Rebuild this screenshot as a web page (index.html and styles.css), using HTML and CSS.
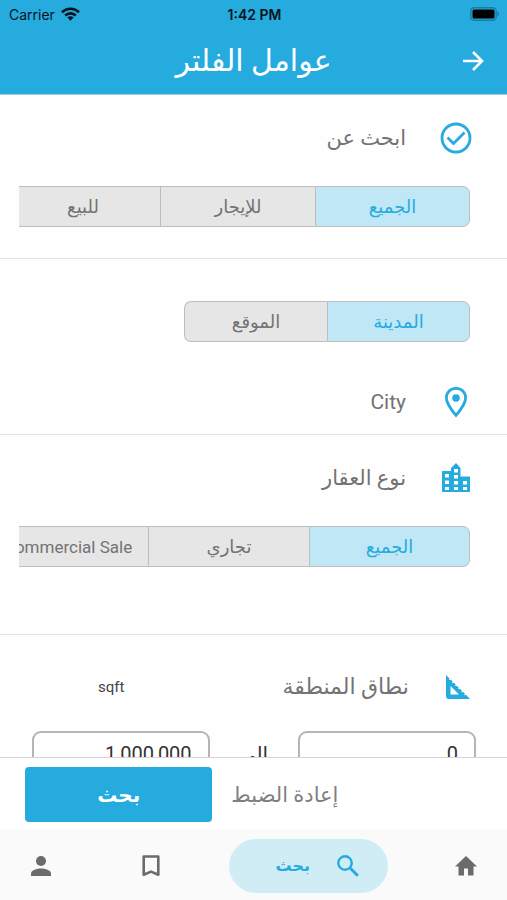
FILE: index.html
```html
<!DOCTYPE html>
<html lang="ar" dir="rtl">
<head>
<meta charset="utf-8">
<meta name="viewport" content="width=device-width, initial-scale=1">
<title>عوامل الفلتر</title>
<link rel="stylesheet" href="styles.css">
</head>
<body>
<header class="top">
  <div class="status" dir="ltr">
    <span class="carrier">Carrier
      <svg width="19" height="14" viewBox="0 0 19 14" aria-hidden="true"><g fill="none" stroke="#06141b" stroke-width="2.6"><path d="M1 5.2a12.2 12.2 0 0 1 17 0"/><path d="M4.2 8.5a7.6 7.6 0 0 1 10.6 0"/></g><path d="M9.500 13.800 6.400 10.600a4.500 4.500 0 0 1 6.200 0z" fill="#06141b"/></svg>
    </span>
    <span class="clock">1:42 PM</span>
    <svg class="battery" width="30" height="14" viewBox="0 0 30 14" aria-hidden="true"><rect x=".8" y=".8" width="25.400" height="12.400" rx="3.500" fill="none" stroke="#1b7ba0" stroke-width="1.400"/><rect x="2.500" y="2.500" width="22" height="9" rx="1.500" fill="#000"/><path d="M27.500 4.500c2 .8 2 4.200 0 5z" fill="#1b7ba0"/></svg>
  </div>
  <div class="titlebar">
    <button class="back" aria-label="رجوع"><svg width="22" height="20" viewBox="0 0 22 20" aria-hidden="true"><path d="M1 10h19M11 1l9 9-9 9" fill="none" stroke="#fff" stroke-width="2.600"/></svg></button>
    <h1>عوامل الفلتر</h1>
  </div>
</header>

<main class="filters">
  <section class="block">
    <div class="heading">
      <svg width="32" height="32" viewBox="0 0 32 32" aria-hidden="true"><circle cx="16" cy="16" r="14" fill="none" stroke="#26abdf" stroke-width="2.800"/><path d="M7.500 15.500l6 6L24.500 10.500" fill="none" stroke="#26abdf" stroke-width="2.800"/></svg>
      <h2>ابحث عن</h2>
    </div>
    <div class="segments" role="group" aria-label="ابحث عن">
      <button class="seg on" aria-pressed="true">الجميع</button>
      <button class="seg" aria-pressed="false">للإيجار</button>
      <button class="seg" aria-pressed="false">للبيع</button>
    </div>
  </section>

  <section class="block place">
    <div class="segments pair" role="group" aria-label="المدينة أو الموقع">
      <button class="seg on" aria-pressed="true">المدينة</button>
      <button class="seg" aria-pressed="false">الموقع</button>
    </div>
    <div class="heading">
      <svg width="32" height="32" viewBox="0 0 32 32" aria-hidden="true"><path d="M16 2.300c-5.500 0-9.600 4.100-9.600 9.500 0 6.600 9.600 17.500 9.600 17.500s9.600-10.900 9.600-17.500c0-5.400-4.100-9.500-9.600-9.500z" fill="none" stroke="#26abdf" stroke-width="2.800"/><circle cx="16" cy="12" r="3.800" fill="#26abdf"/></svg>
      <h2>City</h2>
    </div>
  </section>

  <section class="block type">
    <div class="heading">
      <svg width="32" height="32" viewBox="0 0 32 32" aria-hidden="true"><path fill="#26abdf" fill-rule="evenodd" d="M2 30V9h9V6l5-5 4.500 5v8.500H30V30zM5 12v3.500h4V12zm0 6.500V22h4v-3.500zM5 25v3h4v-3zm9-18v3.500h4V7zm0 6v3.500h4V13zm0 6v3.500h4V19zm0 6v3h4v-3zm9-6v3.500h4V19zm0 6v3h4v-3z"/></svg>
      <h2>نوع العقار</h2>
    </div>
    <div class="segments wide" role="group" aria-label="نوع العقار">
      <button class="seg on" aria-pressed="true">الجميع</button>
      <button class="seg" aria-pressed="false">تجاري</button>
      <button class="seg" aria-pressed="false" lang="en">Commercial Sale</button>
    </div>
  </section>

  <section class="area">
    <div class="area-head">
      <svg width="26" height="26" viewBox="0 0 26 26" aria-hidden="true"><path fill="#26abdf" fill-rule="evenodd" d="M1 1l3.500 3.500L3.800 6l2-.3 1.700 1.700-.7 1.500 2-.2 1.900 1.900-.7 1.500 2-.2 1.700 1.700-.7 1.500 2-.2 1.900 1.900-.7 1.500 2-.2 1.700 1.700-.7 1.500 2-.2L25 25H4c-2 0-3-1-3-3zM5.500 12v8.500H14z"/></svg>
      <h2>نطاق المنطقة</h2>
      <span class="unit">sqft</span>
    </div>
    <div class="range">
      <input type="text" value="0" aria-label="من">
      <span>إلى</span>
      <input type="text" value="1,000,000" aria-label="إلى">
    </div>
  </section>
</main>

<div class="actions">
  <button class="reset">إعادة الضبط</button>
  <button class="search">بحث</button>
</div>

<nav class="tabs">
  <a href="#home" aria-label="الرئيسية"><svg width="24" height="24" viewBox="0 0 24 24" aria-hidden="true"><path fill="#6b6b6b" d="M10 21.500v-7h4v7h5.500V12.500H23L12 2 1 12.500h3.500v9z"/></svg></a>
  <a class="current" href="#search" aria-current="page"><svg width="24" height="24" viewBox="0 0 24 24" aria-hidden="true"><circle cx="9" cy="9" r="6.700" fill="none" stroke="#26abdf" stroke-width="2.400"/><path d="M13.800 13.800l8 8" stroke="#26abdf" stroke-width="3"/></svg><span>بحث</span></a>
  <a href="#saved" aria-label="المحفوظات"><svg width="24" height="24" viewBox="0 0 24 24" aria-hidden="true"><path d="M4.700 2.500h14.600v18.300L12 17.600l-7.300 3.200z" fill="none" stroke="#6b6b6b" stroke-width="2.600" stroke-linejoin="round"/></svg></a>
  <a class="profile" href="#profile" aria-label="حسابي"><svg width="24" height="24" viewBox="0 0 24 24" aria-hidden="true"><circle cx="12" cy="7" r="5" fill="#6b6b6b"/><path fill="#6b6b6b" d="M2 22v-2.500c0-3.300 6-5 10-5s10 1.700 10 5V22z"/></svg></a>
</nav>
</body>
</html>
```
FILE: styles.css
```css
* { box-sizing: border-box; }

body {
  margin: 0;
  height: 100vh;
  display: flex;
  flex-direction: column;
  background: #fefefe;
  color: #737373;
  font-family: Roboto, "DejaVu Sans", sans-serif;
}

h1, h2 { margin: 0; font-weight: 400; }
svg { display: block; flex: none; }
button {
  border: 0;
  padding: 0;
  background: none;
  color: inherit;
  font: inherit;
  cursor: pointer;
}

/* Header */
.top { flex: none; background: #26abdf; border-bottom: 1px solid #9ccfe2; }
.status {
  display: grid;
  grid-template-columns: 1fr auto 1fr;
  align-items: center;
  height: 28px;
  padding: 0 7px 0 9px;
  color: #06141b;
  font-family: Inter, sans-serif;
  font-size: 14px;
}
.carrier { display: flex; align-items: center; gap: 6px; }
.clock { font-weight: 600; }
.battery { justify-self: end; }
.titlebar {
  display: grid;
  grid-template-columns: 24px 1fr 24px;
  align-items: center;
  height: 66px;
  padding: 0 23px;
}
.titlebar h1 { color: #fff; font-size: 30px; line-height: 40px; text-align: center; }

/* Filter sections */
.filters { flex: 1; min-height: 0; overflow: hidden; }
.block {
  padding: 24px 37px 31px 19px;
  border-bottom: 1px solid #e2e2e2;
}
.heading {
  display: flex;
  align-items: center;
  gap: 34px;
  height: 38px;
  margin-inline-start: -2px;
}
h2 { font-size: 21px; line-height: 32px; }

.segments {
  display: flex;
  height: 41px;
  margin-top: 29px;
  overflow: hidden;
}
.seg {
  flex: 0 0 155px;
  border: solid #bdbdbd;
  border-width: 1px 0 1px 1px;
  background: #e6e6e6;
  font-size: 18px;
}
.seg:lang(en) { font-size: 17px; }
.seg:first-child { border-right-width: 1px; border-radius: 0 7px 7px 0; }
.seg.on { background: #bfe7f6; color: #26abdf; }
.pair .seg { flex-basis: 143px; }
.pair .seg:last-child { border-radius: 7px 0 0 7px; }
.wide .seg { flex-basis: 161px; }

.place { padding-top: 42px; padding-bottom: 13px; }
.place .segments { margin: 0 0 41px; }
.type { padding-bottom: 67px; }

/* Area range */
.area { padding: 36px 31px 0 32px; }
.area-head { display: flex; align-items: center; padding-inline-start: 5px; gap: 36px; }
.area-head h2 { font-size: 22px; }
.unit { margin-inline-start: auto; padding-left: 66px; color: #444; font-size: 15px; }
.range {
  display: grid;
  grid-template-columns: 2fr 1fr 2fr;
  align-items: center;
  margin-top: 28px;
  color: #333;
  font-size: 20px;
  text-align: center;
}
.range input {
  width: 100%;
  height: 46px;
  padding: 0 16px;
  border: 2px solid #b5b5b5;
  border-radius: 9px;
  background: #fff;
  color: #333;
  font: inherit;
}

/* Bottom bars */
.actions {
  flex: none;
  display: flex;
  align-items: center;
  gap: 19px;
  height: 72px;
  padding: 2px 25px 0;
  border-top: 1px solid #d5d5d5;
  background: #fff;
}
.reset { margin-inline-start: auto; color: #808080; font-size: 21px; }
.search {
  width: 41%;
  height: 55px;
  border-radius: 4px;
  background: #26abdf;
  color: #fff;
  font-size: 20px;
  font-weight: 700;
}
.tabs {
  flex: none;
  display: flex;
  align-items: center;
  gap: 66px;
  height: 71px;
  padding: 2px 29px 0;
  background: #fafafa;
}
.tabs a { color: #26abdf; text-decoration: none; }
.tabs .profile { margin-inline-start: auto; }
.current {
  display: flex;
  align-items: center;
  gap: 26px;
  width: 159px;
  height: 54px;
  padding-inline-start: 28px;
  border-radius: 27px;
  background: #d0edf5;
  font-size: 16px;
  font-weight: 700;
}
```
